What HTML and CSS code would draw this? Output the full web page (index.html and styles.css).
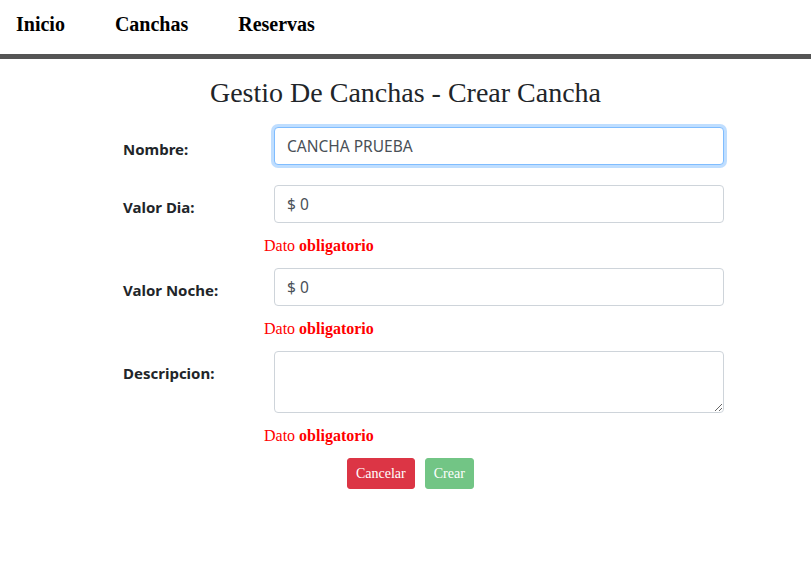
FILE: index.html
```html
<!DOCTYPE html>
<html lang="es">
<head>
<meta charset="utf-8">
<title>Gestio De Canchas - Crear Cancha</title>
<link rel="stylesheet" href="styles.css">
</head>
<body>
<nav class="topnav">
  <a href="#" class="nav-link">Inicio</a>
  <a href="#" class="nav-link">Canchas</a>
  <a href="#" class="nav-link">Reservas</a>
</nav>
<main class="page">
  <h1 class="title">Gestio De Canchas - Crear Cancha</h1>
  <form class="form">
    <div class="field">
      <div class="row">
        <label class="label" for="nombre">Nombre:</label>
        <input id="nombre" class="control focused" type="text" value="CANCHA PRUEBA">
      </div>
    </div>
    <div class="field has-error">
      <div class="row">
        <label class="label" for="dia">Valor Dia:</label>
        <input id="dia" class="control" type="text" value="$ 0">
      </div>
      <div class="error">Dato <b>obligatorio</b></div>
    </div>
    <div class="field has-error">
      <div class="row">
        <label class="label" for="noche">Valor Noche:</label>
        <input id="noche" class="control" type="text" value="$ 0">
      </div>
      <div class="error">Dato <b>obligatorio</b></div>
    </div>
    <div class="field has-error">
      <div class="row">
        <label class="label" for="desc">Descripcion:</label>
        <textarea id="desc" class="control area" rows="2"></textarea>
      </div>
      <div class="error">Dato <b>obligatorio</b></div>
    </div>
    <div class="actions">
      <button type="button" class="btn btn-danger">Cancelar</button>
      <button type="button" class="btn btn-success" disabled>Crear</button>
    </div>
  </form>
</main>
</body>
</html>
```
FILE: styles.css
```css
* { box-sizing: border-box; }
body {
  margin: 0;
  font-family: "Liberation Serif", "Times New Roman", serif;
  color: #212529;
  background: #fff;
}
.topnav {
  display: flex;
  gap: 50px;
  padding: 13px 16px 0;
  height: 59px;
  border-bottom: 5px solid #555;
}
.nav-link {
  font-size: 20px;
  font-weight: bold;
  color: #000;
  text-decoration: none;
  line-height: 23px;
}
.title {
  margin: 18px 0 18px;
  text-align: center;
  font-size: 28px;
  font-weight: normal;
  line-height: 32px;
  color: #212529;
}
.form {
  margin-left: 123px;
  width: 601px;
}
.field { margin-bottom: 20px; }
.field.has-error { margin-bottom: 10px; }
.row {
  display: grid;
  grid-template-columns: 151px 450px;
  align-items: start;
}
.label {
  font-family: "Noto Sans", "Open Sans", sans-serif;
  font-weight: bold;
  font-size: 15px;
  line-height: 24px;
  padding-top: 10px;
  color: #212529;
}
.control {
  display: block;
  width: 450px;
  height: 38px;
  padding: 6px 12px;
  font-family: "Noto Sans", "Open Sans", sans-serif;
  font-size: 15.5px;
  line-height: 24px;
  color: #495057;
  background: #fff;
  border: 1px solid #ced4da;
  border-radius: 4px;
  outline: none;
}
.control.focused {
  border-color: #80bdff;
  box-shadow: 0 0 0 3px rgba(0, 123, 255, 0.25);
}
.control.area {
  height: 62px;
  resize: vertical;
}
.error {
  margin: 11px 0 0 141px;
  font-size: 16px;
  line-height: 24px;
  color: #ff0000;
}
.actions {
  display: flex;
  gap: 10px;
  margin-left: 224px;
}
.btn {
  font-family: "Liberation Serif", "Times New Roman", serif;
  font-size: 14px;
  line-height: 21px;
  padding: 4px 8px;
  color: #fff;
  border: 1px solid transparent;
  border-radius: 3px;
}
.btn-danger {
  background: #dc3545;
  border-color: #dc3545;
}
.btn-success {
  background: #28a745;
  border-color: #28a745;
  opacity: 0.65;
}
```
